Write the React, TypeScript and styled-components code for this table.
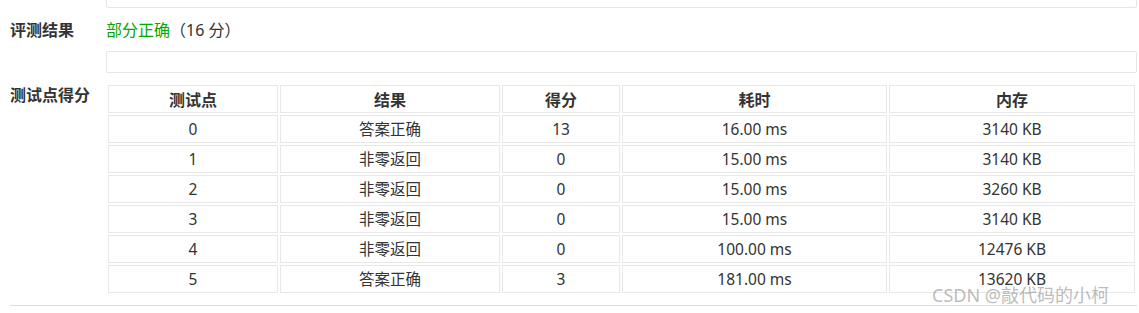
import React from "react";
import styled, { createGlobalStyle } from "styled-components";

const Global = createGlobalStyle`
  html, body { margin: 0; padding: 0; background: #fff; }
  body {
    font-family: "Noto Sans", "Noto Sans CJK SC", sans-serif;
    color: #333;
    overflow: hidden;
  }
`;

const Page = styled.div`
  position: relative;
  width: 1127px;
  margin: -14px 0 0 10px;
  display: flex;
  flex-direction: column;
`;

const Row = styled.div<{ $pad?: string }>`
  display: grid;
  grid-template-columns: 96px 1031px;
  padding: ${(p) => p.$pad ?? "0"};
`;

const Label = styled.div<{ $lh?: number }>`
  font-family: "Noto Sans CJK SC", sans-serif;
  font-weight: 700;
  font-size: 16px;
  line-height: ${(p) => p.$lh ?? 20}px;
  color: #333;
`;

const Box = styled.div`
  height: 22px;
  box-sizing: border-box;
  border: 1px solid #e6e6e6;
  border-radius: 2px;
  background: #fff;
`;

const Result = styled.div`
  font-family: "Noto Sans", "Noto Sans CJK SC", sans-serif;
  font-size: 16px;
  line-height: 20px;
  color: #333;
`;

const Green = styled.span`
  font-family: "Noto Sans CJK SC", sans-serif;
  color: #00a800;
`;

const Table = styled.table`
  width: 1031px;
  border-collapse: separate;
  border-spacing: 2px;
  table-layout: fixed;
`;

const Th = styled.th<{ $w: number }>`
  width: ${(p) => p.$w}px;
  box-sizing: border-box;
  height: 28px;
  padding: 0;
  border: 1px solid #e8e8e8;
  font-family: "Noto Sans CJK SC", sans-serif;
  font-weight: 700;
  font-size: 16px;
  line-height: 20px;
  color: #333;
  text-align: center;
  vertical-align: middle;
`;

const Td = styled.td`
  box-sizing: border-box;
  height: 28px;
  padding: 0;
  border: 1px solid #e8e8e8;
  font-family: "Noto Sans", "Noto Sans CJK SC", sans-serif;
  font-size: 15.5px;
  line-height: 20px;
  color: #333;
  text-align: center;
  vertical-align: middle;
`;

const Divider = styled.div`
  height: 1px;
  background: #dcdcdc;
  margin-top: 10px;
`;

const Watermark = styled.div`
  position: absolute;
  left: 922px;
  top: 297px;
  font-family: "Noto Sans", "Noto Sans CJK SC", sans-serif;
  font-size: 18px;
  line-height: 24px;
  color: rgba(130, 130, 130, 0.55);
  white-space: nowrap;
  pointer-events: none;
`;

const headers: [string, number][] = [
  ["测试点", 170],
  ["结果", 220],
  ["得分", 118],
  ["耗时", 265],
  ["内存", 246],
];

const rows = [
  ["0", "答案正确", "13", "16.00 ms", "3140 KB"],
  ["1", "非零返回", "0", "15.00 ms", "3140 KB"],
  ["2", "非零返回", "0", "15.00 ms", "3260 KB"],
  ["3", "非零返回", "0", "15.00 ms", "3140 KB"],
  ["4", "非零返回", "0", "100.00 ms", "12476 KB"],
  ["5", "答案正确", "3", "181.00 ms", "13620 KB"],
];

export default function App() {
  return (
    <>
      <Global />
      <Page>
        <Row>
          <div />
          <Box />
        </Row>
        <Row $pad="11px 0 11px 0">
          <Label>评测结果</Label>
          <Result>
            <Green>部分正确</Green>（16 分）
          </Result>
        </Row>
        <Row>
          <div />
          <Box />
        </Row>
        <Row $pad="10px 0 0 0">
          <Label $lh={22}>测试点得分</Label>
          <Table>
            <thead>
              <tr>
                {headers.map(([h, w]) => (
                  <Th key={h} $w={w}>
                    {h}
                  </Th>
                ))}
              </tr>
            </thead>
            <tbody>
              {rows.map((r) => (
                <tr key={r[0]}>
                  {r.map((c, i) => (
                    <Td key={i}>{c}</Td>
                  ))}
                </tr>
              ))}
            </tbody>
          </Table>
        </Row>
        <Divider />
        <Watermark>CSDN @敲代码的小柯</Watermark>
      </Page>
    </>
  );
}
